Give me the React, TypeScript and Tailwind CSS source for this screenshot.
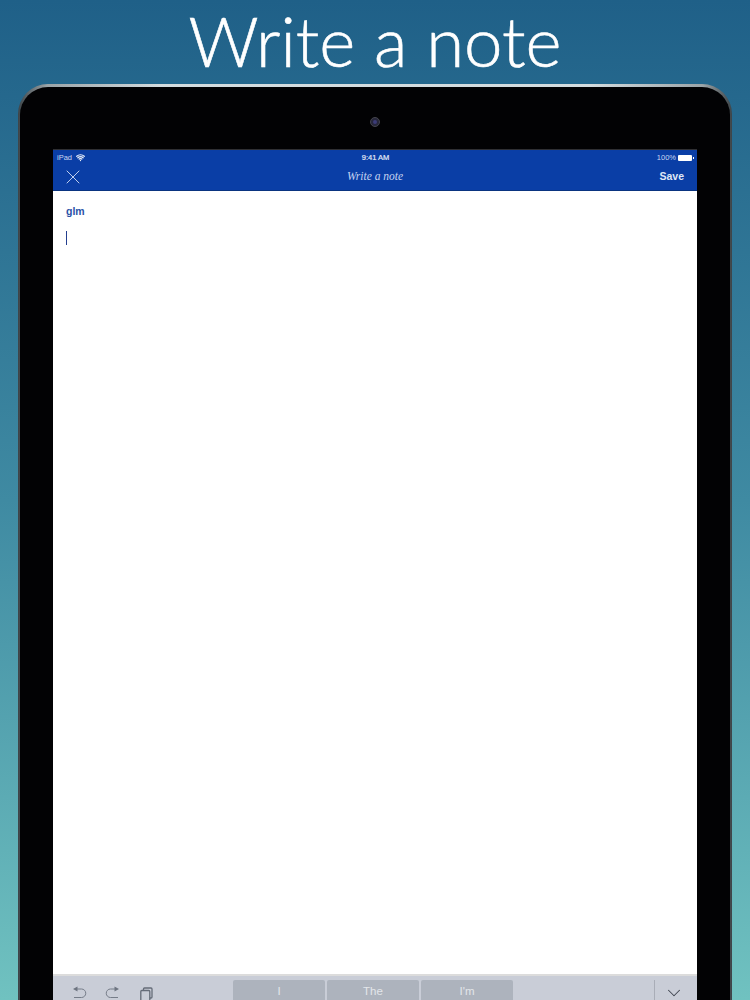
import { X, ChevronDown, Wifi } from 'lucide-react';

const suggestions = ['I', 'The', "I'm"];

function StatusBar() {
  return (
    <div className="h-[15px] flex items-center justify-between pl-[4px] pr-[3px] text-[7.5px] text-[#c9d6f0] font-['Liberation_Sans',sans-serif]">
      <div className="flex-1 flex items-center gap-[4px]">
        <span>iPad</span>
        <Wifi size={9} strokeWidth={3.4} className="text-[#e6ecf8]" />
      </div>
      <span className="text-[#e3e9f7] [-webkit-text-stroke:0.2px_#e3e9f7]">9:41 AM</span>
      <div className="flex-1 flex items-center justify-end gap-[2px]">
        <span>100%</span>
        <div className="flex items-center gap-[1px]">
          <div className="w-[14px] h-[6px] bg-white rounded-[1px]" />
          <div className="w-[1px] h-[2px] bg-white" />
        </div>
      </div>
    </div>
  );
}

function NavBar() {
  return (
    <div className="h-[26px] flex items-center justify-between pl-[8px] pr-[13px] pb-[2px] border-b border-[#0a3480]">
      <div className="w-[65px]">
        <X size={24} strokeWidth={0.9} className="text-[#d5e0f5]" />
      </div>
      <span className="font-['Liberation_Serif',serif] italic text-[11.5px] text-[#c5d3f0]">Write a note</span>
      <span className="w-[60px] text-right font-['Liberation_Sans',sans-serif] font-bold text-[10.5px] text-[#dfe7f7]">Save</span>
    </div>
  );
}

// undo / redo with the solid arrow head of the iOS shortcut bar
function UndoIcon({ flip }: { flip?: boolean }) {
  return (
    <svg width="15" height="14" viewBox="0 0 15 14" className={flip ? '-scale-x-100' : ''}>
      <path d="M1 3 L5.5 0.5 L5.5 5.5 Z" fill="#6d7480" />
      <path d="M5 3 H9.5 A4 4 0 0 1 9.5 11.5 H2" fill="none" stroke="#757c88" strokeWidth="1" />
    </svg>
  );
}

function CopyIcon() {
  return (
    <svg width="13" height="14" viewBox="0 0 13 14" fill="none" stroke="#656c78" strokeWidth="1.3">
      <rect x="0.8" y="3.5" width="9" height="10.5" rx="1" />
      <path d="M3.5 3.5 V2 A1 1 0 0 1 4.5 1 H11 A1 1 0 0 1 12 2 V10 A1 1 0 0 1 11 11 H9.8" />
    </svg>
  );
}

function Toolbar() {
  return (
    <div className="h-[26px] bg-[#c9cdd7] border-t-2 border-[#dcdcdc] flex pt-[4px] overflow-hidden">
      <div className="w-[180px] flex items-start pl-[19px] pt-[6px]">
        <UndoIcon />
        <div className="ml-[18px]"><UndoIcon flip /></div>
        <div className="ml-[20px] mt-[1px]"><CopyIcon /></div>
      </div>
      <div className="flex gap-[2px]">
        {suggestions.map(s => (
          <div key={s} className="w-[92px] h-[24px] bg-[#adb3bd] rounded-t-[2px] flex items-center justify-center text-[11.5px] text-[#e3e6ea] font-['Liberation_Sans',sans-serif]">
            {s}
          </div>
        ))}
      </div>
      <div className="flex-1 flex justify-end">
        <div className="w-[43px] h-[24px] border-l border-[#a9adb7] flex items-start justify-center pt-[2px] pr-[5px] text-[#3e444e]">
          <ChevronDown size={22} strokeWidth={1.1} />
        </div>
      </div>
    </div>
  );
}

export default function App() {
  return (
    <div className="w-[750px] h-[1000px] overflow-hidden flex flex-col bg-gradient-to-b from-[#1f6088] via-[#3f8aa2] to-[#70c2c0]">
      <div className="h-[84px] shrink-0 flex items-start justify-center">
        <h1 className="font-['Lato',sans-serif] font-light text-[69px] leading-none text-white mt-[6px] [-webkit-text-stroke:0.6px_white]">Write a note</h1>
      </div>
      <div className="mx-[18px] flex-1 min-h-0 rounded-t-[30px] pt-[3px] px-[2px] bg-[linear-gradient(90deg,#3d4448_0%,#9aa3a7_4%,#d4dcdf_20%,#d4dcdf_80%,#9aa3a7_96%,#3d4448_100%)] flex flex-col">
        <div className="flex-1 min-h-0 rounded-t-[28px] bg-[#020204] flex flex-col">
          <div className="h-[62px] shrink-0 flex items-center justify-center pt-[8px]">
            <div className="w-[10px] h-[10px] rounded-full bg-[#26263a] border border-[#44444c] flex items-center justify-center">
              <div className="w-[4px] h-[4px] rounded-full bg-[#3c3c78]" />
            </div>
          </div>
          <div className="mx-[33px] flex-1 min-h-0 flex flex-col border-t border-[#2f2f33]">
            <div className="bg-[#0a3ea6]">
              <StatusBar />
              <NavBar />
            </div>
            <div className="flex-1 min-h-0 bg-white pl-[13px] pt-[14px]">
              <p className="font-['Liberation_Sans',sans-serif] font-bold text-[10.5px] leading-[12px] text-[#2a52a8]">glm</p>
              <div className="w-[1px] h-[14px] mt-[14px] bg-[#233f8f]" />
            </div>
            <Toolbar />
          </div>
        </div>
      </div>
    </div>
  );
}
